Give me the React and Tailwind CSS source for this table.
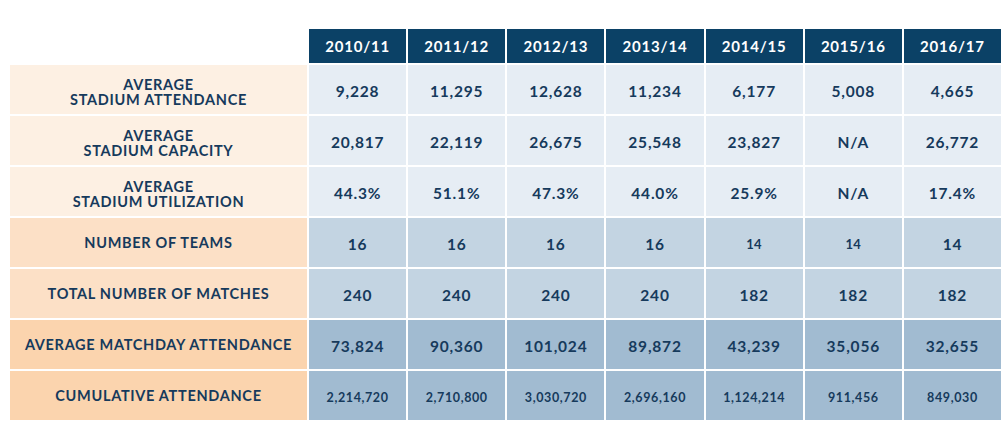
import React from "react";

const years = ["2010/11", "2011/12", "2012/13", "2013/14", "2014/15", "2015/16", "2016/17"];

const rows = [
  { label: ["AVERAGE", "STADIUM ATTENDANCE"], tone: 0, values: ["9,228", "11,295", "12,628", "11,234", "6,177", "5,008", "4,665"] },
  { label: ["AVERAGE", "STADIUM CAPACITY"], tone: 0, values: ["20,817", "22,119", "26,675", "25,548", "23,827", "N/A", "26,772"] },
  { label: ["AVERAGE", "STADIUM UTILIZATION"], tone: 0, values: ["44.3%", "51.1%", "47.3%", "44.0%", "25.9%", "N/A", "17.4%"] },
  { label: ["NUMBER OF TEAMS"], tone: 1, values: ["16", "16", "16", "16", "14", "14", "14"], small: [false, false, false, false, true, true, false] },
  { label: ["TOTAL NUMBER OF MATCHES"], tone: 1, values: ["240", "240", "240", "240", "182", "182", "182"] },
  { label: ["AVERAGE MATCHDAY ATTENDANCE"], tone: 2, values: ["73,824", "90,360", "101,024", "89,872", "43,239", "35,056", "32,655"] },
  { label: ["CUMULATIVE ATTENDANCE"], tone: 2, values: ["2,214,720", "2,710,800", "3,030,720", "2,696,160", "1,124,214", "911,456", "849,030"], cumulative: true },
];

const labelBg = ["bg-[#fdf0e3]", "bg-[#fce0c6]", "bg-[#fbd4ae]"];
const cellBg = ["bg-[#e6edf4]", "bg-[#c3d4e2]", "bg-[#a1bbd1]"];

export default function App() {
  return (
    <div className="w-[1006px] h-[427px] bg-white pt-[29px] pl-[10px] font-['Lato','Liberation_Sans',sans-serif] text-[#163a5c]">
      <div className="grid w-[991px] grid-cols-[297px_repeat(7,1fr)] grid-rows-[34px_repeat(7,49px)] gap-x-[2px] gap-y-[2px]">
        <div />
        {years.map((y) => (
          <div key={y} className="bg-[#0b4166] text-white flex items-center justify-center text-[15px] font-bold tracking-[0.8px]">
            {y}
          </div>
        ))}
        {rows.map((r, ri) => (
          <React.Fragment key={ri}>
            <div className={`${labelBg[r.tone]} flex flex-col items-center justify-center text-[14.5px] font-bold leading-[15px] tracking-[0.7px] ${r.label.length === 1 ? "pb-[1px]" : "pt-[5px]"}`}>
              {r.label.map((l) => (
                <span key={l}>{l}</span>
              ))}
            </div>
            {r.values.map((v, vi) => (
              <div
                key={vi}
                className={`${cellBg[r.tone]} flex items-center justify-center pt-[5px] font-bold ${
                  r.cumulative ? "text-[12.5px] tracking-[0.6px]" : r.small && r.small[vi] ? "text-[13px] tracking-[0.3px]" : "text-[15.5px] tracking-[0.8px]"
                }`}
              >
                {v}
              </div>
            ))}
          </React.Fragment>
        ))}
      </div>
    </div>
  );
}
